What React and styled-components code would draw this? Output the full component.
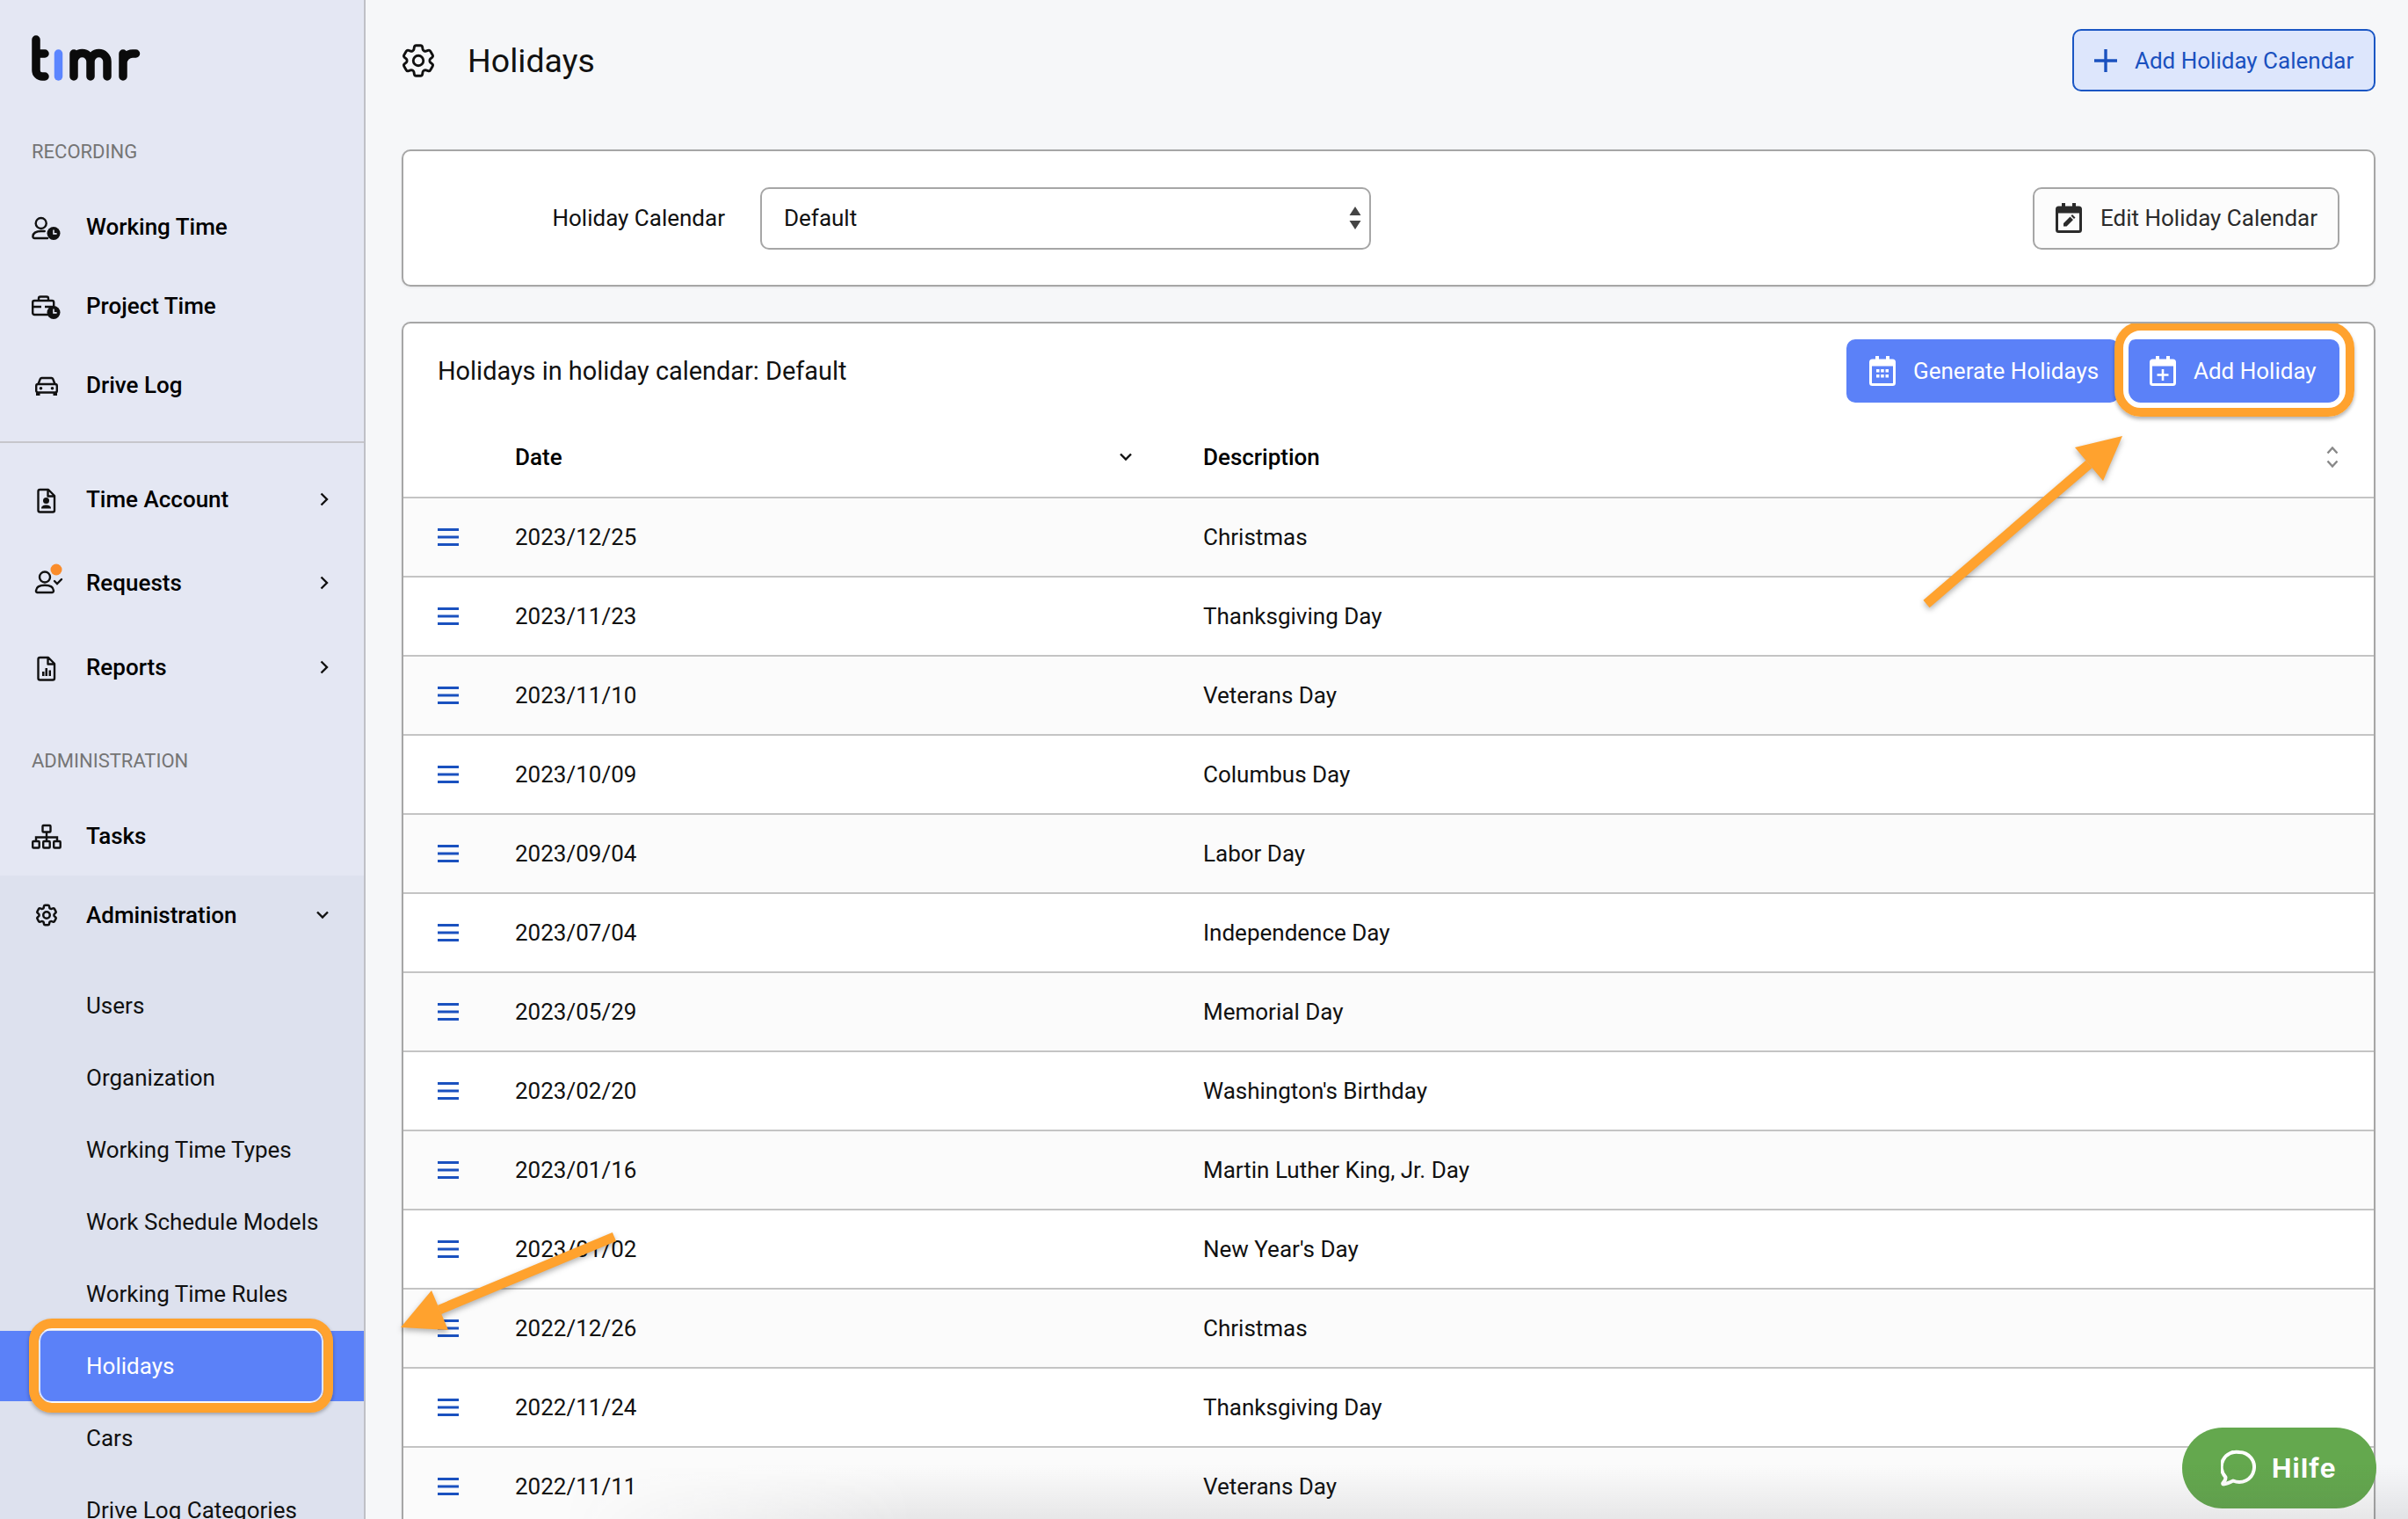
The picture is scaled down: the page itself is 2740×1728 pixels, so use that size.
import React from 'react';
import styled, { createGlobalStyle } from 'styled-components';
import { HiOutlineCog6Tooth } from 'react-icons/hi2';

const GlobalStyle = createGlobalStyle`
  html, body {
    margin: 0;
    padding: 0;
    background: #F6F7F9;
    font-family: Roboto, "Liberation Sans", sans-serif;
    color: #111;
  }
  * { box-sizing: border-box; }
`;

const Page = styled.div`
  position: relative;
  display: flex;
  width: 2740px;
  height: 1728px;
  overflow: hidden;
`;

// Sidebar
const Sidebar = styled.aside`
  width: 416px;
  flex: none;
  height: 100%;
  overflow: hidden;
  background: #E4E7F3;
  border-right: 2px solid #BFC0C6;
`;

const LogoWrap = styled.div`
  height: 136px;
  padding: 38px 0 0 36px;
  svg { display: block; }
`;

const SectionLabel = styled.div`
  height: 72px;
  margin: ${p => p.$top || 0}px 0 5px;
  padding-left: 36px;
  display: flex;
  align-items: center;
  font-size: 22px;
  color: #757575;
`;

const NavItem = styled.div`
  height: ${p => p.$h || 90}px;
  display: flex;
  align-items: center;
  padding-left: 36px;
  font-size: 26px;
  font-weight: 500;
  color: #000;
`;

const NavIcon = styled.span`
  width: 34px;
  height: 34px;
  flex: none;
  margin-right: 28px;
  display: flex;
  align-items: center;
  justify-content: center;
  svg { display: block; overflow: visible; }
`;

const NavChevron = styled.span`
  margin-left: auto;
  margin-right: 40px;
  display: flex;
`;

const Divider = styled.div`
  height: 2px;
  margin: 19px 0 16px;
  background: #C6C6CB;
`;

const AdminGroup = styled.div`
  background: #DDE1EE;
  padding-bottom: 40px;
`;

const SubList = styled.div`
  padding-top: 17px;
`;

const SubItem = styled.div`
  position: relative;
  height: 82px;
  padding-left: 98px;
  display: flex;
  align-items: center;
  font-size: 26px;
  color: ${p => (p.$active ? '#fff' : '#111')};
  background: ${p => (p.$active ? 'linear-gradient(#5B81F8, #5B81F8) 0 1px / 100% 80px no-repeat' : 'none')};
`;

const SideRing = styled.div`
  position: absolute;
  top: -13px;
  left: 33px;
  width: 346px;
  height: 107px;
  border: 11px solid #FFA22E;
  border-radius: 26px;
  box-shadow: 0 2px 4px rgba(0, 0, 0, 0.3), inset 0 0 0 2px rgba(255, 255, 255, 0.8);
`;

// Main column
const Main = styled.main`
  flex: 1;
  min-width: 0;
  padding: 0 37px 0 41px;
  display: flex;
  flex-direction: column;
`;

const Header = styled.header`
  height: 170px;
  padding-bottom: 33px;
  display: flex;
  align-items: center;
`;

const Title = styled.h1`
  margin: 0 0 0 37px;
  font-size: 37.5px;
  font-weight: 400;
  color: #111;
`;

const HeaderGear = styled(HiOutlineCog6Tooth)`
  margin: 0 -4px;
  color: #111;
`;

const AddCalendarBtn = styled.button`
  margin-left: auto;
  width: 345px;
  height: 71px;
  padding: 0 0 0 23px;
  display: flex;
  align-items: center;
  gap: 20px;
  border: 2px solid #1A56C4;
  border-radius: 10px;
  background: #DDE6FC;
  color: #1A51BF;
  font: 400 26px Roboto, sans-serif;
`;

const Card = styled.section`
  background: #fff;
  border: 2px solid #A6A6A6;
  border-radius: 10px;
  box-shadow: 0 1px 3px rgba(0, 0, 0, 0.08);
`;

const CalendarCard = styled(Card)`
  height: 156px;
  padding-right: 39px;
  display: flex;
  align-items: center;
`;

const FieldLabel = styled.label`
  width: 366px;
  margin-right: 40px;
  text-align: right;
  font-size: 26px;
`;

const SelectBox = styled.div`
  width: 695px;
  height: 71px;
  padding: 0 9px 0 25px;
  display: flex;
  align-items: center;
  justify-content: space-between;
  border: 2px solid #A6A6A6;
  border-radius: 10px;
  font-size: 26px;
`;

const EditBtn = styled.button`
  margin-left: auto;
  width: 349px;
  height: 71px;
  padding: 0 0 0 24px;
  display: flex;
  align-items: center;
  gap: 21px;
  border: 2px solid #A6A6A6;
  border-radius: 10px;
  background: #FCFCFC;
  color: #2B2B2B;
  font: 400 26px Roboto, sans-serif;
`;

const TableCard = styled(Card)`
  margin-top: 40px;
  flex: 1;
  border-bottom: none;
  border-radius: 10px 10px 0 0;
  overflow: hidden;
`;

const TableHead = styled.div`
  height: 107px;
  padding: 18px 39px 0 39px;
  display: flex;
  align-items: flex-start;
`;

const TableTitle = styled.h2`
  margin: 0;
  height: 72px;
  display: flex;
  align-items: center;
  font-size: 28.9px;
  font-weight: 400;
  color: #111;
`;

const ActionGroup = styled.div`
  margin-left: auto;
  display: flex;
  gap: 9px;
`;

const PrimaryBtn = styled.button`
  position: relative;
  height: 72px;
  width: ${p => p.$w}px;
  padding: 0 0 0 26px;
  display: flex;
  align-items: center;
  gap: 20px;
  border: none;
  border-radius: 10px;
  background: #5B81F8;
  color: #fff;
  font: 400 26px Roboto, sans-serif;
`;

const ButtonRing = styled.div`
  position: absolute;
  top: -20px;
  left: -14px;
  right: -17px;
  bottom: -16px;
  border: 10px solid #FFA22E;
  border-radius: 30px;
  box-shadow: 0 3px 4px rgba(0, 0, 0, 0.3), inset 0 0 0 6px #fff;
`;

const Row = styled.div`
  height: ${p => (p.$header ? 92 : 90)}px;
  display: grid;
  grid-template-columns: 127px 783px 1fr;
  align-items: center;
  border-bottom: 2px solid #C4C4C4;
  background: ${p => (p.$odd ? '#FBFBFB' : '#fff')};
  font-size: 26px;
  font-weight: ${p => (p.$header ? 500 : 400)};
  color: ${p => (p.$header ? '#000' : '#111')};
`;

const HandleCell = styled.div`
  padding-left: 39px;
  display: flex;
  svg { display: block; }
`;

const SortCell = styled.div`
  display: flex;
  align-items: center;
  justify-content: space-between;
  padding-right: ${p => p.$right}px;
`;

// Things that lie over the page
const Annotations = styled.svg`
  position: absolute;
  top: 0;
  left: 0;
  pointer-events: none;
  filter: drop-shadow(0 3px 3px rgba(0, 0, 0, 0.3));
`;

const HelpButton = styled.button`
  position: absolute;
  right: 36px;
  bottom: 12px;
  width: 221px;
  height: 92px;
  padding: 0 0 0 44px;
  display: flex;
  align-items: center;
  gap: 18px;
  border: none;
  border-radius: 46px;
  background: #64A84E;
  color: #fff;
  font: 700 30px Inter, sans-serif;
  letter-spacing: 1.2px;
`;

const BottomFade = styled.div`
  position: absolute;
  left: 640px;
  right: 0;
  bottom: 0;
  height: 62px;
  pointer-events: none;
  background: linear-gradient(rgba(60, 60, 70, 0), rgba(60, 60, 70, 0.1));
  -webkit-mask-image: linear-gradient(to right, transparent, #000 400px);
  mask-image: linear-gradient(to right, transparent, #000 400px);
`;

// Icons
const Logo = () => (
  <svg width="128" height="58" viewBox="36 38 128 58" fill="none" strokeWidth="9.5" strokeLinecap="round">
    <path stroke="#0B0B0B" d="M41 45V80a7 7 0 0 0 7 7h3M41 61H51" />
    <path stroke="#5B85FF" d="M66.5 61V87" />
    <path stroke="#0B0B0B" d="M84 87V61M84 70a9.5 9.5 0 0 1 19 0V87M103 70a9.5 9.5 0 0 1 19 0V87" />
    <path stroke="#0B0B0B" d="M140 87V61M140 72a11 11 0 0 1 11-11h3.5" />
  </svg>
);

const ClockBadge = ({ cx, cy }) => (
  <>
    <circle cx={cx} cy={cy} r="7.5" fill="#111" stroke="none" />
    <path d={`M${cx} ${cy - 4}v4.4h3.6`} stroke="#E4E7F3" strokeWidth="1.6" fill="none" />
  </>
);

const WorkingTimeIcon = () => (
  <svg width="34" height="34" viewBox="0 0 34 34" fill="none" stroke="#111" strokeWidth="2.4">
    <circle cx="10.7" cy="13" r="6" />
    <path d="M18 30H3.4a2 2 0 0 1-2-2.2c.3-3.6 4-5.8 9.3-5.8h4" strokeLinecap="round" />
    <ClockBadge cx={25} cy={24.5} />
  </svg>
);

const ProjectTimeIcon = () => (
  <svg width="34" height="34" viewBox="0 0 34 34" fill="none" stroke="#111" strokeWidth="2.4">
    <rect x="1.2" y="11" width="24" height="16" rx="2" />
    <path d="M8 11V8.5a2 2 0 0 1 2-2h7a2 2 0 0 1 2 2V11M1.2 18H11M15 18h10" />
    <ClockBadge cx={25} cy={24.5} />
  </svg>
);

const CarIcon = () => (
  <svg width="34" height="34" viewBox="0 0 34 34">
    <path fill="none" stroke="#111" strokeWidth="2.4" d="M7.5 16l2.2-5.8a2 2 0 0 1 1.9-1.2h10.8a2 2 0 0 1 1.9 1.2L26.5 16" />
    <rect x="5.2" y="16" width="23.6" height="9.5" rx="2" fill="none" stroke="#111" strokeWidth="2.4" />
    <path fill="#111" d="M5 25h4.5v4H5zM24.5 25H29v4h-4.500z" />
    <circle cx="10.5" cy="20.7" r="1.8" fill="#111" />
    <circle cx="23.5" cy="20.7" r="1.8" fill="#111" />
  </svg>
);

const docPath = 'M9.5 6H19l7 7v16.5a2 2 0 0 1-2 2H9.5a2 2 0 0 1-2-2V8a2 2 0 0 1 2-2zM18.5 6v7.5H26';

const TimeAccountIcon = () => (
  <svg width="34" height="34" viewBox="0 0 34 34">
    <path d={docPath} fill="none" stroke="#111" strokeWidth="2.4" strokeLinejoin="round" />
    <circle cx="16.5" cy="18.5" r="3.5" fill="#111" />
    <path d="M11 27.5c0-3 2.4-4 5.5-4s5.5 1 5.5 4z" fill="#111" />
  </svg>
);

const RequestsIcon = () => (
  <svg width="34" height="34" viewBox="0 0 34 34" fill="none" stroke="#111" strokeWidth="2.4">
    <circle cx="15" cy="10.5" r="6" />
    <path d="M6.5 28H23a2 2 0 0 0 2-2.2c-.4-4-4.5-6-10-6s-9.6 2-10 6A2 2 0 0 0 6.5 28z" />
    <path d="M26 15l3 3 5-5" strokeLinecap="round" />
    <circle cx="28" cy="2" r="6.5" fill="#FA8C2B" stroke="none" />
  </svg>
);

const ReportsIcon = () => (
  <svg width="34" height="34" viewBox="0 0 34 34">
    <path d={docPath} fill="none" stroke="#111" strokeWidth="2.4" strokeLinejoin="round" />
    <path d="M12 22h2.5v5H12zM15.500 18h2.500v9h-2.500zM19.500 20.500H22V27h-2.500z" fill="#111" />
  </svg>
);

const TasksIcon = () => (
  <svg width="34" height="34" viewBox="0 0 34 34" fill="none" stroke="#111" strokeWidth="2.4">
    <rect x="12.5" y="5" width="9" height="7.5" rx="1" />
    <rect x="1.2" y="23" width="7.5" height="7.5" rx="1" />
    <rect x="13.2" y="23" width="7.5" height="7.5" rx="1" />
    <rect x="25.2" y="23" width="7.5" height="7.5" rx="1" />
    <path d="M17 12.5V23M5 23v-4.5h24V23" />
  </svg>
);

const ChevronRight = () => (
  <svg width="10" height="16" viewBox="0 0 10 16" fill="none" stroke="#111" strokeWidth="2.4">
    <path d="M1.5 1.5L8 8l-6.5 6.5" />
  </svg>
);

const ChevronDown = () => (
  <svg width="14" height="10" viewBox="0 0 14 10" fill="none" stroke="#111" strokeWidth="2.4">
    <path d="M1 1.5l6 6 6-6" />
  </svg>
);

const PlusIcon = () => (
  <svg width="26" height="26" viewBox="0 0 26 26" stroke="#1A51BF" strokeWidth="3.4">
    <path d="M13 0v26M0 13h26" />
  </svg>
);

const CalendarIcon = ({ color, children }) => (
  <svg width="30" height="34" viewBox="0 0 30 34" fill="none">
    <rect x="1.5" y="5" width="27" height="27.5" rx="2" stroke={color} strokeWidth="3" />
    <path d="M1.5 5h27v6.5h-27zM7 0h4v6H7zM19 0h4v6h-4z" fill={color} />
    {children}
  </svg>
);

const SelectArrows = () => (
  <svg width="14" height="26" viewBox="0 0 14 26" fill="#444">
    <path d="M7 0l6.5 10H.5zM7 26L.5 16h13z" />
  </svg>
);

const SortArrows = () => (
  <svg width="14" height="26" viewBox="0 0 14 26" fill="none" stroke="#888" strokeWidth="2.4">
    <path d="M1.5 8.5L7 2.5l5.5 6M1.5 17.5l5.5 6 5.5-6" />
  </svg>
);

const Handle = () => (
  <svg width="24" height="20" viewBox="0 0 24 20" fill="#1A51BF">
    <path d="M0 0h24v3H0zM0 8.5h24v3H0zM0 17h24v3H0z" />
  </svg>
);

const holidays = [
  ['2023/12/25', 'Christmas'],
  ['2023/11/23', 'Thanksgiving Day'],
  ['2023/11/10', 'Veterans Day'],
  ['2023/10/09', 'Columbus Day'],
  ['2023/09/04', 'Labor Day'],
  ['2023/07/04', 'Independence Day'],
  ['2023/05/29', 'Memorial Day'],
  ['2023/02/20', "Washington's Birthday"],
  ['2023/01/16', 'Martin Luther King, Jr. Day'],
  ['2023/01/02', "New Year's Day"],
  ['2022/12/26', 'Christmas'],
  ['2022/11/24', 'Thanksgiving Day'],
  ['2022/11/11', 'Veterans Day'],
];

const subItems = ['Users', 'Organization', 'Working Time Types', 'Work Schedule Models', 'Working Time Rules', 'Holidays', 'Cars', 'Drive Log Categories'];

export default function App() {
  return (
    <Page>
      <GlobalStyle />
      <Sidebar>
        <LogoWrap><Logo /></LogoWrap>
        <SectionLabel>RECORDING</SectionLabel>
        <NavItem><NavIcon><WorkingTimeIcon /></NavIcon>Working Time</NavItem>
        <NavItem><NavIcon><ProjectTimeIcon /></NavIcon>Project Time</NavItem>
        <NavItem><NavIcon><CarIcon /></NavIcon>Drive Log</NavItem>
        <Divider />
        <NavItem $h={96}><NavIcon><TimeAccountIcon /></NavIcon>Time Account<NavChevron><ChevronRight /></NavChevron></NavItem>
        <NavItem $h={94}><NavIcon><RequestsIcon /></NavIcon>Requests<NavChevron><ChevronRight /></NavChevron></NavItem>
        <NavItem $h={98}><NavIcon><ReportsIcon /></NavIcon>Reports<NavChevron><ChevronRight /></NavChevron></NavItem>
        <SectionLabel $top={21}>ADMINISTRATION</SectionLabel>
        <NavItem><NavIcon><TasksIcon /></NavIcon>Tasks</NavItem>
        <AdminGroup>
          <NavItem>
            <NavIcon><HiOutlineCog6Tooth size={30} color="#111" strokeWidth={2} /></NavIcon>
            Administration
            <NavChevron><ChevronDown /></NavChevron>
          </NavItem>
          <SubList>
            {subItems.map(name => (
              <SubItem key={name} $active={name === 'Holidays'}>
                {name}
                {name === 'Holidays' && <SideRing />}
              </SubItem>
            ))}
          </SubList>
        </AdminGroup>
      </Sidebar>

      <Main>
        <Header>
          <HeaderGear size={46} />
          <Title>Holidays</Title>
          <AddCalendarBtn><PlusIcon />Add Holiday Calendar</AddCalendarBtn>
        </Header>

        <CalendarCard>
          <FieldLabel>Holiday Calendar</FieldLabel>
          <SelectBox>Default<SelectArrows /></SelectBox>
          <EditBtn>
            <CalendarIcon color="#2B2B2B">
              <path d="M9 26.5V23l7.5-7.5 3.5 3.5-7.5 7.5zM17.5 14.5L19 13l3.5 3.5-1.5 1.5z" fill="#2B2B2B" />
            </CalendarIcon>
            Edit Holiday Calendar
          </EditBtn>
        </CalendarCard>

        <TableCard>
          <TableHead>
            <TableTitle>Holidays in holiday calendar: Default</TableTitle>
            <ActionGroup>
              <PrimaryBtn $w={310}>
                <CalendarIcon color="#fff">
                  <path d="M8 15h3.5v3.5H8zM13.200 15h3.500v3.500h-3.500zM18.500 15H22v3.500h-3.500zM8 21h3.500v3.500H8zM13.200 21h3.500v3.500h-3.500zM18.500 21H22v3.500h-3.500z" fill="#fff" />
                </CalendarIcon>
                Generate Holidays
              </PrimaryBtn>
              <PrimaryBtn $w={242}>
                <CalendarIcon color="#fff">
                  <path d="M15 15v13M8.5 21.5h13" stroke="#fff" strokeWidth="2.6" />
                </CalendarIcon>
                Add Holiday
                <ButtonRing />
              </PrimaryBtn>
            </ActionGroup>
          </TableHead>

          <Row $header>
            <span />
            <SortCell $right={81}>Date<ChevronDown /></SortCell>
            <SortCell $right={40}>Description<SortArrows /></SortCell>
          </Row>
          {holidays.map(([date, name], i) => (
            <Row key={date} $odd={i % 2 === 0}>
              <HandleCell><Handle /></HandleCell>
              <span>{date}</span>
              <span>{name}</span>
            </Row>
          ))}
        </TableCard>
      </Main>

      <Annotations width="2740" height="1728" viewBox="0 0 2740 1728">
        <path d="M2192 687L2377 528" stroke="#FFA22E" strokeWidth="11" />
        <polygon points="2415,496 2361,509 2393,547" fill="#FFA22E" />
        <path d="M699 1407L500 1490" stroke="#FFA22E" strokeWidth="11" />
        <polygon points="456,1510 491,1468 510,1513" fill="#FFA22E" />
      </Annotations>

      <HelpButton>
        <svg width="40" height="42" viewBox="0 0 40 42" fill="none" stroke="#fff" strokeWidth="4" strokeLinejoin="round">
          <path d="M21 3a17 17 0 1 1-7 32.5C11 37 7 39 3 39.5c-1 0-1-1-.5-1.5 2-2 3-4 3-6.5A17 17 0 0 1 21 3z" />
        </svg>
        Hilfe
      </HelpButton>
      <BottomFade />
    </Page>
  );
}
